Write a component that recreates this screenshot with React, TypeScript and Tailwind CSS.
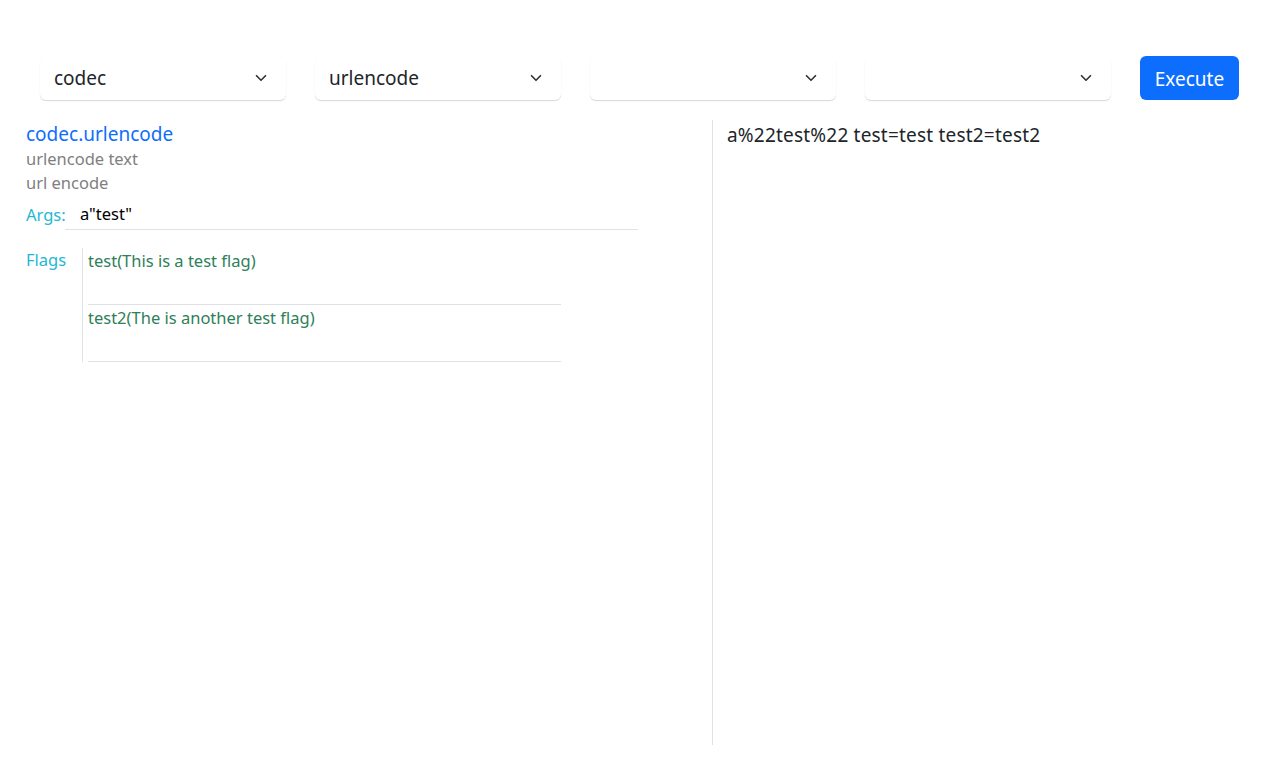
import { ChevronDown } from "lucide-react"

const selects = ["codec", "urlencode", "", ""]

const flags = [
  { name: "test", desc: "This is a test flag" },
  { name: "test2", desc: "The is another test flag" },
]

export default function App() {
  return (
    <div className="min-h-screen bg-white text-[#212529]" style={{ fontFamily: '"Noto Sans", "Open Sans", sans-serif' }}>
      {/* toolbar */}
      <div className="flex items-center pt-[56px] pl-[40px] pr-[28px]">
        <div className="flex gap-[29px]">
          {selects.map((s, i) => (
            <div
              key={i}
              className="w-[246px] h-[43px] flex items-center justify-between pl-[14px] pr-[16px] rounded-md bg-white shadow-[0_1px_1px_rgba(0,0,0,0.16)]"
            >
              <span className="text-[19px] leading-none">{s}</span>
              <ChevronDown className="w-[18px] h-[18px] text-[#333]" strokeWidth={2.2} />
            </div>
          ))}
        </div>
        <button className="ml-auto w-[99px] h-[44px] pt-[2px] rounded-md bg-[#0d6efd] text-white text-[19px]">Execute</button>
      </div>

      {/* body */}
      <div className="flex mt-[20px] pl-[26px]">
        <div className="w-[687px] h-[625px] border-r border-[#dee2e6]">
          <div className="text-[19px] leading-[26px] text-[#0d6efd] pt-[1px]">codec.urlencode</div>
          <div className="text-[16.5px] leading-[24px] text-[#808080]">urlencode text</div>
          <div className="text-[16.5px] leading-[24px] text-[#808080]">url encode</div>
          <div className="flex items-center mt-[5px] h-[30px]">
            <span className="text-[16.5px] text-[#22b8d4] w-[39px]">Args:</span>
            <div className="w-[573px] h-[30px] border-b border-[#dee2e6] pl-[15px] flex items-center text-[16.5px] text-black">a"test"</div>
          </div>
          <div className="flex mt-[18px]">
            <span className="text-[16.5px] leading-[24px] text-[#22b8d4] w-[56px]">Flags</span>
            <div className="border-l border-[#dee2e6] pl-[5px]">
              {flags.map((f) => (
                <div key={f.name} className="w-[473px] h-[57px] border-b border-[#dee2e6] text-[16.5px] leading-[24px] text-[#2e8059] pt-[1px]">
                  {f.name}({f.desc})
                </div>
              ))}
            </div>
          </div>
        </div>
        <div className="flex-1 pl-[14px] pt-[2px] text-[19px] leading-[26px] tracking-[0.2px]">a%22test%22 test=test test2=test2</div>
      </div>
    </div>
  )
}
